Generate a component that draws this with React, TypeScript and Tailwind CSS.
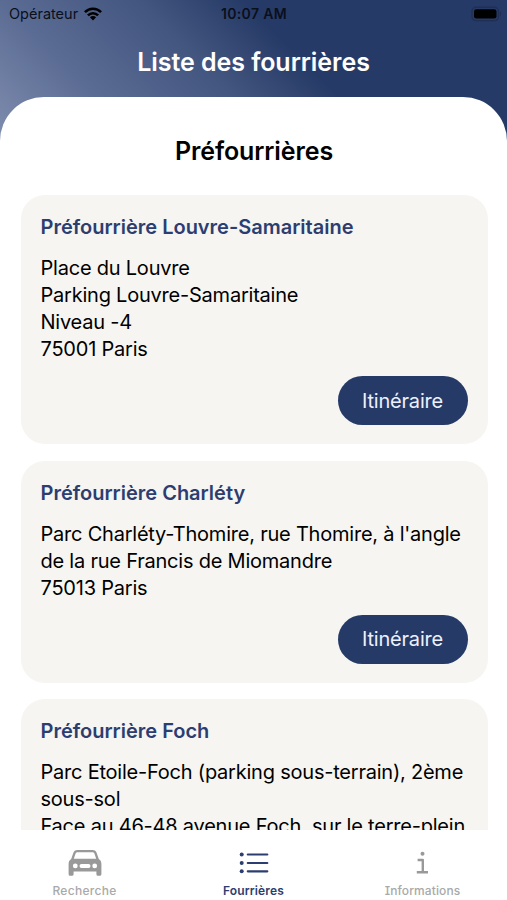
import React from 'react';
import clsx from 'clsx';

const fourrieres = [
  {
    name: 'Préfourrière Louvre-Samaritaine',
    lines: ['Place du Louvre', 'Parking Louvre-Samaritaine', 'Niveau -4', '75001 Paris'],
  },
  {
    name: 'Préfourrière Charléty',
    lines: ["Parc Charléty-Thomire, rue Thomire, à l'angle", 'de la rue Francis de Miomandre', '75013 Paris'],
  },
  {
    name: 'Préfourrière Foch',
    lines: ['Parc Etoile-Foch (parking sous-terrain), 2ème', 'sous-sol', 'Face au 46-48 avenue Foch, sur le terre-plein'],
  },
];

function WifiIcon() {
  return (
    <svg width="18" height="14" viewBox="0 0 18 14" fill="none" stroke="#000" strokeWidth="2.6">
      <path d="M0.9 5.2C5.4 0.6 12.6 0.6 17.1 5.2" />
      <path d="M3.9 8.4c2.9-2.9 7.3-2.9 10.2 0" />
      <path d="M9 13.4 5.9 10.3c1.8-1.6 4.4-1.6 6.2 0z" fill="#000" stroke="none" />
    </svg>
  );
}

function BatteryIcon() {
  return (
    <svg width="31" height="16" viewBox="0 0 31 16">
      <rect x="1" y="1.2" width="26.5" height="13.4" rx="4" fill="none" stroke="#1f2f56" strokeWidth="1.4" />
      <rect x="3" y="3.2" width="22.5" height="9.4" rx="2.4" fill="#000" />
      <path d="M29 5.6c1.6.8 1.6 3.8 0 4.6z" fill="#1f2f56" />
    </svg>
  );
}

function CarIcon() {
  return (
    <svg width="34" height="28" viewBox="0 0 34 28" fill="currentColor">
      <path
        fillRule="evenodd"
        d="M9.4 1H24.6C26.8 1 28 2 28.7 4L30.8 10C32.6 11.2 33.4 12.8 33.4 15V25.2Q33.4 26.8 31.8 26.8H30Q28.4 26.8 28.4 25.2V22.6H5.6V25.2Q5.6 26.8 4 26.8H2.2Q0.6 26.8 0.6 25.2V15C0.6 12.8 1.4 11.2 3.2 10L5.3 4C6 2 7.200 1 9.400 1ZM9.700 3.200C8.400 3.200 7.800 3.700 7.400 4.900L5.800 9.800H28.200L26.600 4.900C26.200 3.700 25.600 3.200 24.300 3.200ZM7.300 14.500a2.400 2.400 0 1 0 0 4.800 2.400 2.400 0 0 0 0-4.800ZM26.700 14.500a2.400 2.400 0 1 0 0 4.800 2.400 2.400 0 0 0 0-4.800ZM13.500 14.900a2 2 0 0 0 0 4h7a2 2 0 0 0 0-4Z"
      />
    </svg>
  );
}

function ListIcon() {
  return (
    <svg width="30" height="22" viewBox="0 0 30 22" fill="currentColor" stroke="currentColor">
      <g stroke="none">
        <circle cx="2.7" cy="2.5" r="2" />
        <circle cx="2.7" cy="11" r="2" />
        <circle cx="2.7" cy="19.3" r="2" />
      </g>
      <path d="M8.8 2.5H28.3M8.8 11H28.3M8.8 19.3H28.3" strokeWidth="2.2" strokeLinecap="round" />
    </svg>
  );
}

function InfoIcon() {
  return (
    <svg width="14" height="24" viewBox="0 0 14 24" fill="none" stroke="currentColor" strokeWidth="2.4">
      <circle cx="6.5" cy="2.8" r="2" fill="currentColor" stroke="none" />
      <path d="M1.6 9H6.800V21.200M0.800 21.200H12" strokeLinejoin="round" />
    </svg>
  );
}

const tabs = [
  { label: 'Recherche', icon: CarIcon, active: false, labelClass: 'tracking-[0.3px]' },
  { label: 'Fourrières', icon: ListIcon, active: true, labelClass: 'font-semibold tracking-[0.15px]' },
  { label: 'Informations', icon: InfoIcon, active: false, labelClass: "tracking-[0.1px] [font-feature-settings:'cv08']" },
];

export default function App() {
  return (
    <div className="flex h-[900px] w-[507px] flex-col overflow-hidden bg-white font-['Inter','Liberation_Sans',sans-serif] text-black">
      <header className="h-[152px] shrink-0 bg-[linear-gradient(45deg,#8290b0_0%,#5b6c94_23%,#43567f_44%,#263a67_60%)]">
        <div className="grid h-7 grid-cols-3 items-center pl-[9px] pr-[5px] text-[14.5px] text-[#0a0f1c]">
          <div className="flex items-center gap-1.5">
            <span>Opérateur</span>
            <WifiIcon />
          </div>
          <span className="-ml-[3px] -mt-px text-center text-[14px] font-semibold tracking-[0.35px]">10:07 AM</span>
          <div className="flex justify-end">
            <BatteryIcon />
          </div>
        </div>
        <h1 className="mt-[18px] text-center text-[25px] font-semibold leading-[32px] tracking-[-0.05px] text-white">
          Liste des fourrières
        </h1>
      </header>

      <main className="-mt-[55.5px] flex min-h-0 flex-1 flex-col overflow-hidden rounded-t-[44px] bg-white pl-[20.5px] pr-[19.5px]">
        <h2 className="mt-[37.5px] text-center text-[25px] font-semibold leading-[34px] tracking-[-0.1px]">Préfourrières</h2>
        <div className="mt-[27px] flex flex-col gap-[16.5px]">
          {fourrieres.map((f) => (
            <section key={f.name} className="shrink-0 rounded-[24px] bg-[#f6f5f2] px-5 pb-[19px] pt-[18px]">
              <h3 className="text-[20px] font-semibold leading-[28px] text-[#2c3e70]">{f.name}</h3>
              <div className="mt-[14px] whitespace-nowrap text-[20px] leading-[27px] tracking-[-0.22px]">
                {f.lines.map((line) => (
                  <p key={line}>{line}</p>
                ))}
              </div>
              <div className="mt-[13px] flex justify-end">
                <button className="h-[49px] w-[130px] rounded-full bg-[#263a67] text-[20px] tracking-[-0.2px] text-[#edf1fb]">
                  Itinéraire
                </button>
              </div>
            </section>
          ))}
        </div>
      </main>

      <nav className="grid h-[70px] shrink-0 grid-cols-3 bg-white">
        {tabs.map(({ label, icon: Icon, active, labelClass }) => (
          <div key={label} className={clsx('flex flex-col items-center', active ? 'text-[#2c3e70]' : 'text-[#999]')}>
            <div className="mt-[18px] flex h-[30px] items-center">
              <Icon />
            </div>
            <span className={clsx('mt-[5px] text-[12px] font-medium leading-4', labelClass, !active && 'text-[#a9a9a9]')}>
              {label}
            </span>
          </div>
        ))}
      </nav>
    </div>
  );
}
